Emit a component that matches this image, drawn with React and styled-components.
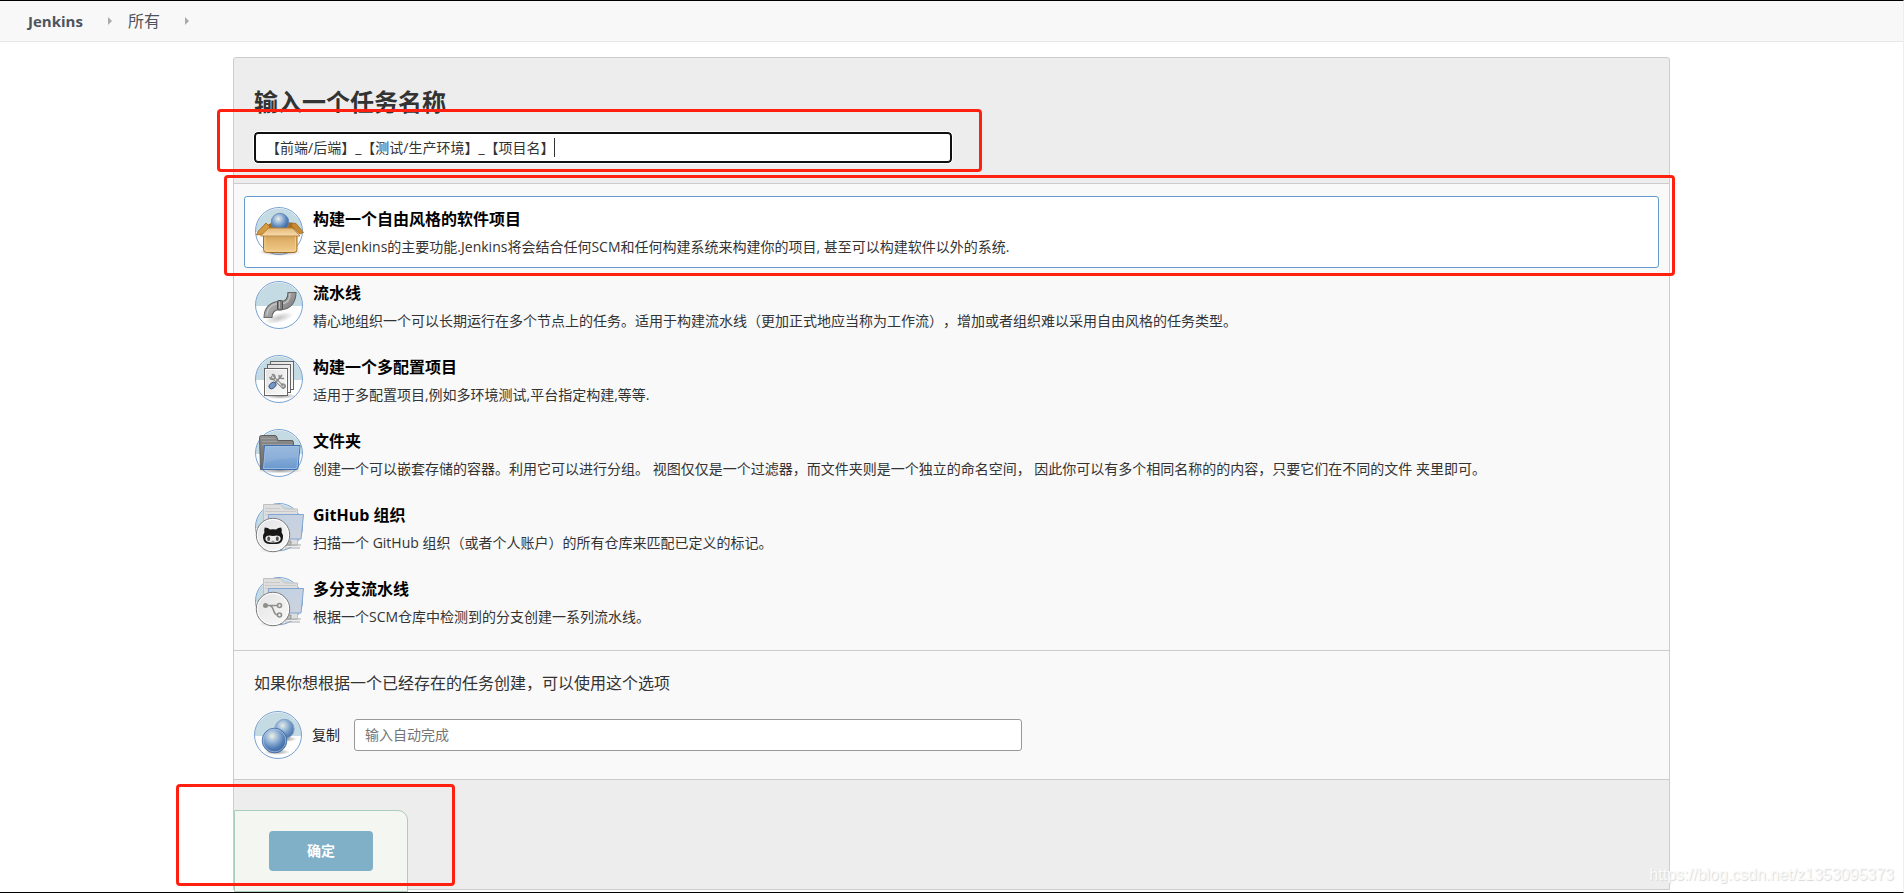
import styled, { createGlobalStyle } from "styled-components";

const GlobalStyle = createGlobalStyle`
  * {
    box-sizing: border-box;
  }

  body {
    margin: 0;
    background-color: #fff;
    color: #333;
    font-family: "Open Sans", "Noto Sans CJK SC", sans-serif;
    font-size: 14px;
    line-height: 20px;
    text-spacing-trim: space-all;
  }

  h2, p, ul {
    margin: 0;
    padding: 0;
  }
`;

const Page = styled.div`
  position: relative;
  min-height: 100vh;
  display: flex;
  flex-direction: column;
  border-top: 1px solid #000;
  border-right: 1px solid #eee;
  border-bottom: 1px solid #000;
  overflow: hidden;
`;

const Breadcrumbs = styled.nav`
  display: flex;
  align-items: center;
  height: 41px;
  padding-left: 28px;
  background-color: #f8f8f8;
  border-bottom: 1px solid #e7e7e7;

  a {
    color: #4d545d;
    text-decoration: none;
    font-size: 16px;
  }

  a:first-child {
    font-size: 15px;
    font-weight: 700;
  }
`;

const Arrow = styled.span`
  margin: 0 16px 0 25px;
  border: 4px solid transparent;
  border-left-color: #aaa;
  border-right-width: 0;
`;

const Panel = styled.form`
  flex: 1;
  display: flex;
  flex-direction: column;
  margin: 15px 233px 2px;
  background-color: #ededed;
  border: 1px solid #ccc;
  border-radius: 3px 3px 0 0;

  @media (max-width: 1100px) {
    margin: 15px 15px 2px;
  }
`;

const NameSection = styled.div`
  padding: 28px 20px 20px;

  h2 {
    font-size: 24px;
    line-height: 32px;
    font-weight: 700;
  }
`;

const Field = styled.div`
  position: relative;
  width: 50%;
  margin-top: 14px;
`;

const NameInput = styled.input`
  display: block;
  width: 100%;
  height: 31px;
  padding: 0 10px 2px;
  background-color: #fff;
  border: 2px solid #101010;
  border-radius: 4px;
  color: #333;
  font: inherit;
  outline: 1px solid #fff;
  caret-color: transparent;
`;

const Caret = styled.span`
  position: absolute;
  top: 6px;
  left: 300px;
  width: 1px;
  height: 19px;
  background-color: #333;
  pointer-events: none;
`;

const Mark = styled.span`
  position: absolute;
  inset: ${({ $inset }) => $inset};
  border: 3px solid #ff2010;
  border-radius: 4px;
  pointer-events: none;
`;

const Items = styled.ul`
  display: flex;
  flex-direction: column;
  gap: 2px;
  padding: 12px 10px;
  background-color: #f9f9f9;
  border: solid #ccc;
  border-width: 1px 0;
  list-style: none;
`;

const Item = styled.li`
  position: relative;
  display: flex;
  gap: 10px;
  min-height: 72px;
  padding: 10px;
  border: 1px solid ${({ $active }) => ($active ? "#6699cc" : "transparent")};
  border-radius: 3px;
  background-color: ${({ $active }) => ($active ? "#fff" : "transparent")};

  h3 {
    margin: 0;
    color: #000;
    font-size: 16px;
    line-height: 24px;
    font-weight: 700;
  }

  p {
    margin-top: 6px;
  }
`;

const Icon = styled.svg`
  flex: none;
  display: block;
  width: 48px;
  height: 48px;
  overflow: visible;
`;

const CopySection = styled.div`
  padding: 20px;
  background-color: #f9f9f9;
  border-bottom: 1px solid #ccc;

  p {
    font-size: 16px;
    line-height: 24px;
  }
`;

const CopyRow = styled.div`
  display: flex;
  align-items: center;
  gap: 10px;
  margin-top: 16px;

  label {
    margin-right: 4px;
    color: #222;
  }
`;

const CopyInput = styled.input`
  flex: 0 1 668px;
  min-width: 0;
  height: 32px;
  padding: 0 10px 2px;
  background-color: #fff;
  border: 1px solid #999;
  border-radius: 3px;
  color: #333;
  font: inherit;

  &::placeholder {
    color: #757575;
  }
`;

const Footer = styled.div`
  flex: 1;
  padding-top: 30px;
`;

const ButtonBox = styled.div`
  position: relative;
  width: 174px;
  height: 82px;
  margin-bottom: -3px;
  padding: 20px 34px;
  background-color: #f4f7f1;
  border: 1px solid #aaccbb;
  border-radius: 0 10px 0 0;
`;

const OkButton = styled.button`
  display: block;
  width: 104px;
  height: 40px;
  padding: 0;
  background-color: #80b0c8;
  border: 0;
  border-radius: 4px;
  color: #fff;
  font: inherit;
  font-weight: 700;
  cursor: pointer;
`;

const Watermark = styled.span`
  position: absolute;
  right: 9px;
  bottom: 7px;
  color: #fafafa;
  font-family: "Liberation Sans", Arial, sans-serif;
  font-size: 16px;
  text-shadow: 1px 1px 1px #d8d8d8;
`;

const Backdrop = () => (
  <>
    <circle cx="24" cy="24" r="23.5" fill="#fff" />
    <path d="M.5 25a23.5 23.5 0 0 1 47 0z" fill="#c5dbe3" />
    <circle cx="24" cy="24" r="23.5" fill="none" stroke="#78a2d2" />
  </>
);

const Gradients = () => (
  <svg width="0" height="0" display="block" aria-hidden="true">
    <defs>
      <radialGradient id="ball" cx="40%" cy="32%" r="65%">
        <stop offset="0" stopColor="#eef1e2" />
        <stop offset=".35" stopColor="#a1bddb" />
        <stop offset=".75" stopColor="#5581b8" />
        <stop offset="1" stopColor="#3c68a4" />
      </radialGradient>
      <radialGradient id="shadow">
        <stop offset="0" stopColor="#555" stopOpacity=".6" />
        <stop offset="1" stopColor="#555" stopOpacity="0" />
      </radialGradient>
      <linearGradient id="box" x2="0" y2="1">
        <stop offset="0" stopColor="#c99850" />
        <stop offset=".35" stopColor="#e0b26a" />
        <stop offset="1" stopColor="#f1cb8b" />
      </linearGradient>
      <linearGradient id="flap" x2="0" y2="1">
        <stop offset="0" stopColor="#e3b775" />
        <stop offset="1" stopColor="#f8dcae" />
      </linearGradient>
      <linearGradient id="pipe" x2="1" y2="1">
        <stop offset="0" stopColor="#6c6c6c" />
        <stop offset=".4" stopColor="#a8a8a8" />
        <stop offset="1" stopColor="#6c6c6c" />
      </linearGradient>
      <linearGradient id="paper" x2="1" y2="1">
        <stop offset="0" stopColor="#e2e2e2" />
        <stop offset="1" stopColor="#fafafa" />
      </linearGradient>
      <linearGradient id="folder" x2="0" y2="1">
        <stop offset="0" stopColor="#90b4dc" />
        <stop offset=".5" stopColor="#83aad6" />
        <stop offset="1" stopColor="#6998cd" />
      </linearGradient>
      <linearGradient id="tab" x2="0" y2="1">
        <stop offset="0" stopColor="#8e8e8e" />
        <stop offset="1" stopColor="#696969" />
      </linearGradient>
      <linearGradient id="screen" x2="1" y2="1">
        <stop offset="0" stopColor="#bfd0e2" />
        <stop offset="1" stopColor="#cdd3de" />
      </linearGradient>
    </defs>
  </svg>
);

const BoxIcon = () => (
  <Icon viewBox="0 0 48 48">
    <Backdrop />
    <ellipse cx="25" cy="45" rx="22" ry="4" fill="url(#shadow)" />
    <path d="M12 19l5-3h20l4 4-5 4H10z" fill="#a96e20" stroke="#99641d" />
    <circle cx="25" cy="15" r="8.7" fill="url(#ball)" stroke="#5e84b5" strokeWidth=".8" />
    <path d="M11 16l4 4-7 7-6.500 1 2-4z" fill="#d59b42" stroke="#a36c20" strokeWidth=".9" />
    <path d="M37 16l4 .5 7.500 9-4 1.500-8-8z" fill="#c78a31" stroke="#a36c20" strokeWidth=".9" />
    <path d="M8.500 27h33.500v15.500q0 3-3 3h-27.500q-3 0-3-3z" fill="url(#box)" stroke="#a66d24" />
    <path d="M10 29h30.500v13q0 2-2 2h-26.500q-2 0-2-2z" fill="none" stroke="#f5d7a0" strokeWidth=".7" />
    <path d="M13.500 21h24l7.500 8H5.500z" fill="url(#flap)" stroke="#b27d36" strokeWidth=".9" />
  </Icon>
);

const PipeIcon = () => (
  <Icon viewBox="0 0 48 48">
    <Backdrop />
    <ellipse cx="24" cy="37" rx="15" ry="5" fill="url(#shadow)" opacity=".6" transform="rotate(-15 24 37)" />
    <path d="M13 37c0-8.500 5-12.500 12-12.500h1c7 0 11-5 11-13.500" fill="none" stroke="#585858" strokeWidth="9" />
    <path d="M13 36.300c0-7.800 5-11.800 12-11.800h1c7 0 11-5 11-12.800" fill="none" stroke="url(#pipe)" strokeWidth="7.300" />
    <path d="M12 34c0-7 5-11.500 13-11.500h1c6 0 9-4 9-10" fill="none" stroke="#d0d0d0" strokeWidth="1.500" opacity=".7" />
    <rect x="22.500" y="19.500" width="5" height="9.500" rx="1" fill="#808080" stroke="#505050" />
    <path d="M24.500 20.500v7" stroke="#bbb" />
  </Icon>
);

const MatrixIcon = () => (
  <Icon viewBox="0 0 48 48">
    <Backdrop />
    <ellipse cx="25" cy="41" rx="17" ry="3" fill="url(#shadow)" />
    <g fill="url(#paper)" stroke="#666">
      <rect x="15.500" y="6.500" width="23" height="28" />
      <rect x="12.500" y="9.500" width="23" height="28" />
      <rect x="9.500" y="13.500" width="23" height="27" />
    </g>
    <rect x="10.500" y="14.500" width="21" height="25" fill="none" stroke="#fff" />
    <g fill="none" strokeLinecap="round">
      <path d="M17.500 22l9.500 9" stroke="#888" strokeWidth="3.200" />
      <path d="M17.500 22l9.500 9" stroke="#ededed" strokeWidth="1.300" />
      <path d="M15 22.500a2.500 2.500 0 1 0 2.500-3" stroke="#888" strokeWidth="1.600" />
      <path d="M27.500 33a2 2 0 1 0-1-3" stroke="#888" strokeWidth="1.600" />
      <path d="M19 29l6-6.500 1.500-2" stroke="#888" strokeWidth="1.800" />
      <path d="M24 20.500q0 3.500 4.500 3" stroke="#888" strokeWidth="1.500" />
    </g>
    <ellipse cx="17.500" cy="30.500" rx="4" ry="2.700" fill="#7797c3" stroke="#365481" strokeWidth=".9" transform="rotate(-40 17.500 30.500)" />
  </Icon>
);

const FolderIcon = () => (
  <Icon viewBox="0 0 48 48">
    <Backdrop />
    <ellipse cx="25" cy="41.500" rx="23" ry="3" fill="url(#shadow)" />
    <path d="M5.500 40.500l-1-32q0-2 2-2h13.500q1.500 0 2 2l1 3h14q1.500 0 1.500 2v25z" fill="url(#tab)" stroke="#5e5e5e" />
    <path d="M6 9.500h14M7 12.500h15M7 15.500h30" stroke="#a5a5a5" strokeWidth=".8" />
    <path d="M9.500 16.500h35.500l-2 22.500q0 1.500-2 1.500H6.500q1.500-1 1.500-3z" fill="url(#folder)" stroke="#3d6ead" />
    <path d="M10.500 17.500h33.500l-2 20.500q0 1.500-1.500 1.500H8.500z" fill="none" stroke="#a5c3e5" strokeWidth=".8" />
    <path d="M11 18h32l-1 11q-18 0-32 5z" fill="#fff" opacity=".08" />
  </Icon>
);

// shared background of the organization style icons
const RemoteFolder = () => (
  <>
    <Backdrop />
    <path d="M8.500 45V1.500h17l4 4.500h13v36z" fill="#dedede" stroke="#c1c1c1" />
    <path d="M10 5.500h15M10 8.500h31M10 11.500h31" stroke="#c9c9c9" />
    <path d="M13.500 11.500h35l-2.500 24.500H13z" fill="url(#screen)" stroke="#83a5d2" />
    <path d="M32 38h4v4h-5z" fill="#bbb" stroke="#888" strokeWidth=".7" />
    <path d="M30 42h16M30 45h15" stroke="#aaa" strokeWidth="1.200" />
    <path d="M32 43.500h13" stroke="#eee" />
    <ellipse cx="18" cy="47" rx="15" ry="3" fill="url(#shadow)" opacity=".4" />
    <circle cx="18" cy="32" r="16.700" fill="url(#paper)" stroke="#777" />
    <circle cx="18" cy="32" r="15.700" fill="none" stroke="#fff" />
  </>
);

const GithubIcon = () => (
  <Icon viewBox="0 0 48 48">
    <RemoteFolder />
    <path d="M9.700 24.500q3.500.2 5.300 2 3-.7 6 0 2-1.800 5.300-2 .9 3 .3 5 1.700 2 1.400 5-.3 6-6.500 6.500h-7q-6.200-.5-6.500-6.500-.2-3 1.400-5-.6-2 .3-5z" fill="#171717" />
    <path d="M18 33q6.500-1.500 7.500 1.500c.8 4-2.500 5-7.500 5s-8.300-1-7.500-5q1-3 7.500-1.500z" fill="#eee" />
    <ellipse cx="13.700" cy="35.700" rx="1.500" ry="2.300" fill="#555" />
    <ellipse cx="22.300" cy="35.700" rx="1.500" ry="2.300" fill="#555" />
    <path d="M16.500 38.300h3" stroke="#777" />
  </Icon>
);

const BranchIcon = () => (
  <Icon viewBox="0 0 48 48">
    <RemoteFolder />
    <g fill="none" stroke="#8d8f8a" strokeWidth="1.600">
      <path d="M10 28.500h12M14 28.500c6 0 3 9.500 9 9.500" />
      <circle cx="24.500" cy="28.500" r="2" />
      <circle cx="24.500" cy="38" r="2" />
    </g>
    <circle cx="10.500" cy="28.500" r="2.500" fill="#8d8f8a" />
  </Icon>
);

const CopyIcon = () => (
  <Icon viewBox="0 0 48 48">
    <Backdrop />
    <ellipse cx="32" cy="28" rx="11" ry="3" fill="url(#shadow)" />
    <circle cx="30.500" cy="18" r="9.700" fill="url(#ball)" stroke="#7c9ac5" opacity=".85" />
    <ellipse cx="23" cy="41" rx="13" ry="3" fill="url(#shadow)" />
    <circle cx="20.500" cy="29.500" r="12.300" fill="url(#ball)" stroke="#466fa8" strokeWidth=".9" />
    <circle cx="20.500" cy="29.500" r="11.300" fill="none" stroke="#b3c9e4" strokeWidth=".7" />
  </Icon>
);

const items = [
  {
    id: "freestyle",
    icon: BoxIcon,
    title: "构建一个自由风格的软件项目",
    text: "这是Jenkins的主要功能.Jenkins将会结合任何SCM和任何构建系统来构建你的项目, 甚至可以构建软件以外的系统.",
    active: true,
  },
  {
    id: "pipeline",
    icon: PipeIcon,
    title: "流水线",
    text: "精心地组织一个可以长期运行在多个节点上的任务。适用于构建流水线（更加正式地应当称为工作流），增加或者组织难以采用自由风格的任务类型。",
  },
  {
    id: "matrix",
    icon: MatrixIcon,
    title: "构建一个多配置项目",
    text: "适用于多配置项目,例如多环境测试,平台指定构建,等等.",
  },
  {
    id: "folder",
    icon: FolderIcon,
    title: "文件夹",
    text: "创建一个可以嵌套存储的容器。利用它可以进行分组。 视图仅仅是一个过滤器，而文件夹则是一个独立的命名空间， 因此你可以有多个相同名称的的内容，只要它们在不同的文件 夹里即可。",
  },
  {
    id: "github",
    icon: GithubIcon,
    title: "GitHub 组织",
    text: "扫描一个 GitHub 组织（或者个人账户）的所有仓库来匹配已定义的标记。",
  },
  {
    id: "multibranch",
    icon: BranchIcon,
    title: "多分支流水线",
    text: "根据一个SCM仓库中检测到的分支创建一系列流水线。",
  },
];

const App = () => {
  return (
    <Page>
      <GlobalStyle />
      <Gradients />
      <Breadcrumbs>
        <a href="#jenkins">Jenkins</a>
        <Arrow />
        <a href="#all">所有</a>
        <Arrow />
      </Breadcrumbs>
      <Panel onSubmit={(e) => e.preventDefault()}>
        <NameSection>
          <h2 id="name-heading">输入一个任务名称</h2>
          <Field>
            <NameInput
              type="text"
              aria-labelledby="name-heading"
              autoComplete="off"
              defaultValue="【前端/后端】_【测试/生产环境】_【项目名】"
            />
            <Caret />
            <Mark $inset="-23px -30px -9px -37px" />
          </Field>
        </NameSection>
        <Items>
          {items.map(({ id, icon: ItemIcon, title, text, active }) => (
            <Item key={id} $active={active}>
              <ItemIcon />
              <div>
                <h3>{title}</h3>
                <p>{text}</p>
              </div>
              {active && <Mark $inset="-22px -17px -9px -21px" />}
            </Item>
          ))}
        </Items>
        <CopySection>
          <p>如果你想根据一个已经存在的任务创建，可以使用这个选项</p>
          <CopyRow>
            <CopyIcon />
            <label htmlFor="from">复制</label>
            <CopyInput id="from" type="text" placeholder="输入自动完成" />
          </CopyRow>
        </CopySection>
        <Footer>
          <ButtonBox>
            <OkButton type="submit">确定</OkButton>
            <Mark $inset="-27px -48px 5px -59px" />
          </ButtonBox>
        </Footer>
      </Panel>
      <Watermark>https://blog.csdn.net/z1353095373</Watermark>
    </Page>
  );
};

export default App;
